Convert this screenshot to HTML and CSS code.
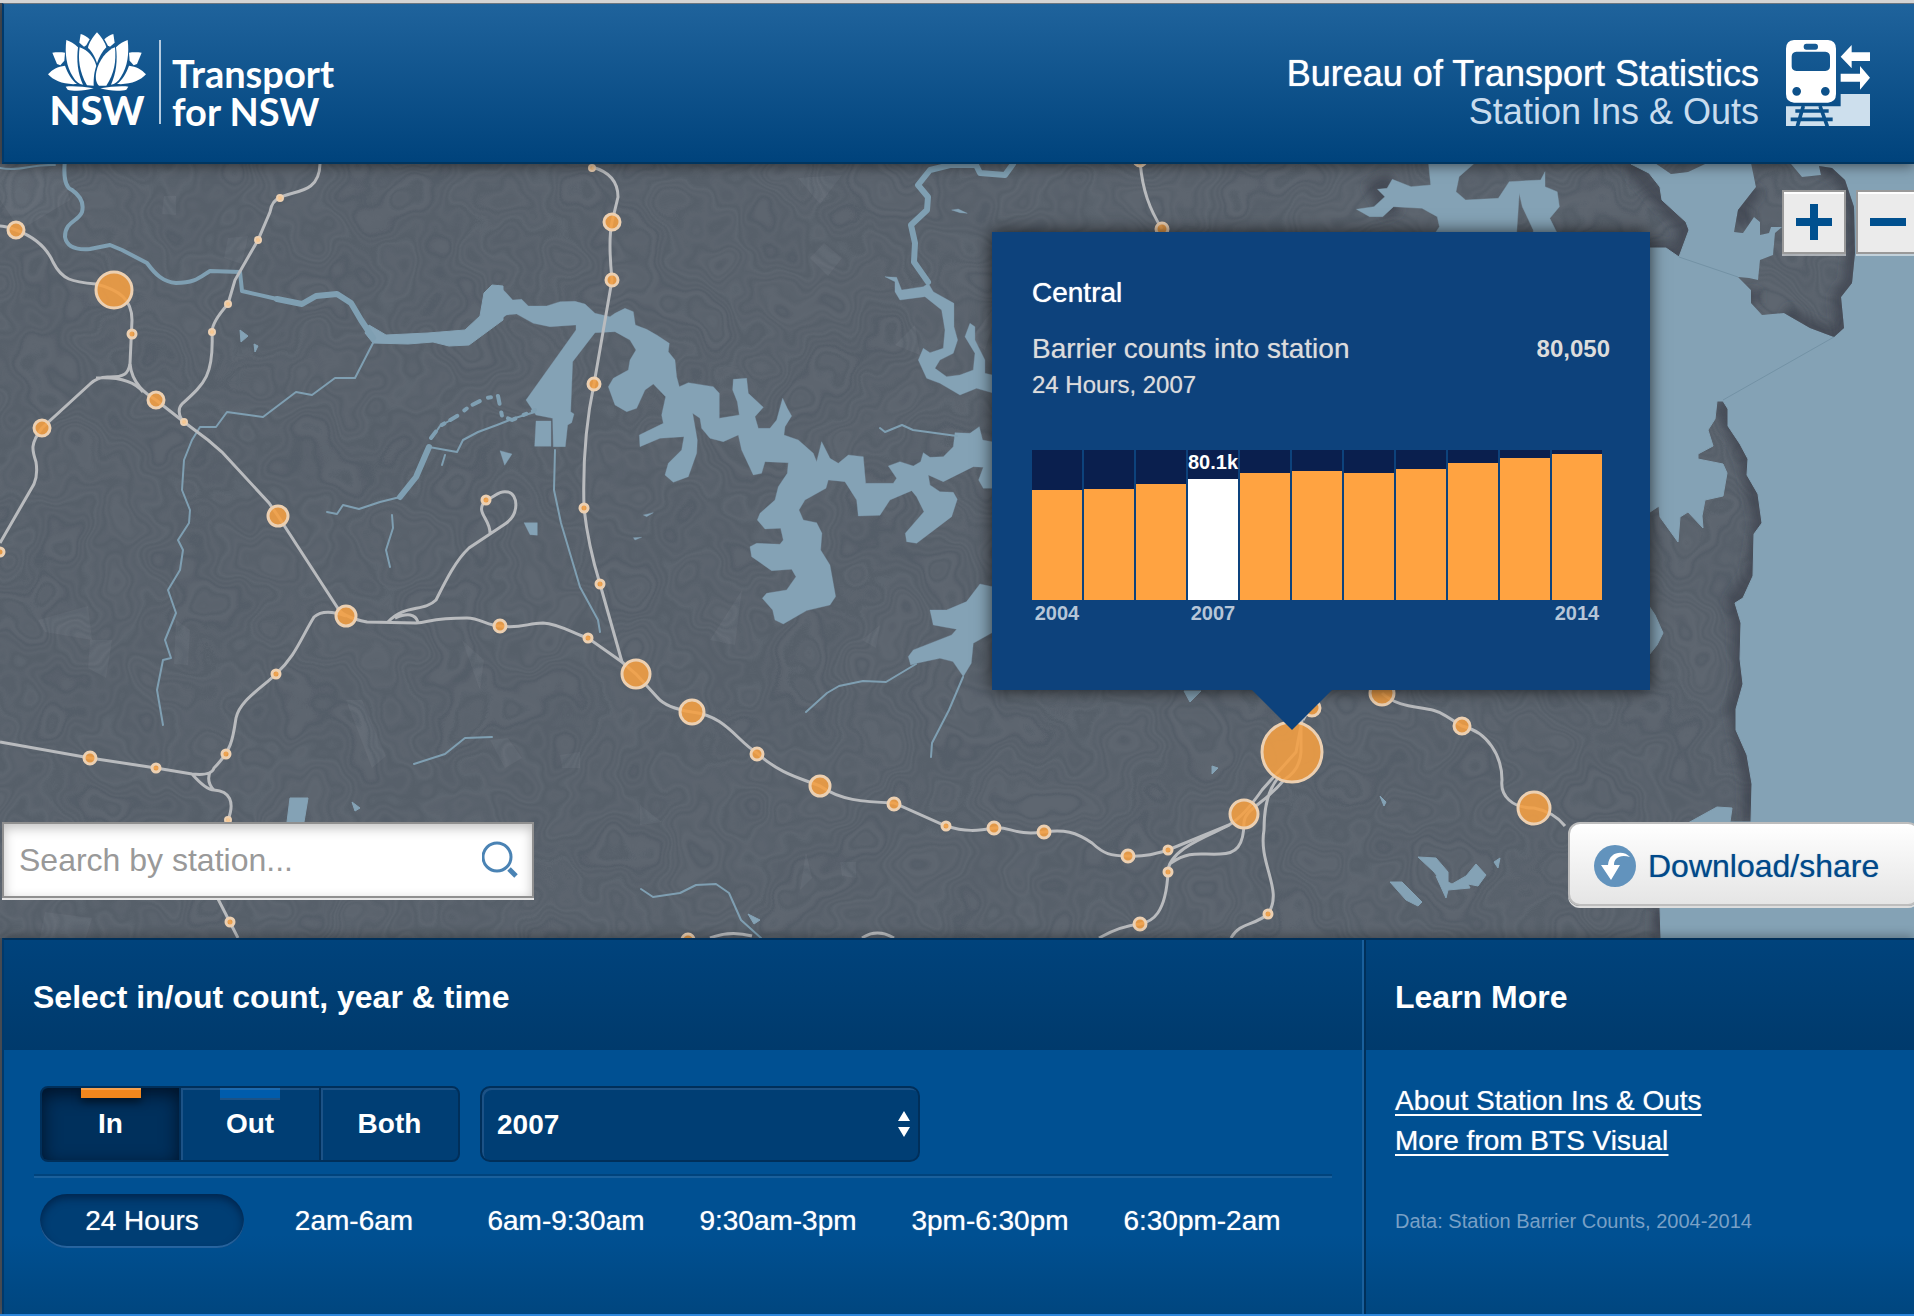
FILE: index.html
```html
<!DOCTYPE html>
<html lang="en">
<head>
<meta charset="utf-8">
<title>Station Ins &amp; Outs</title>
<link rel="stylesheet" href="styles.css">
</head>
<body>
<header class="site-header">
  <a class="brand" href="#">
    <span class="brand-mark">
      <svg class="lotus" viewBox="53 36 294 180" aria-hidden="true">
        <g id="lotus-side">
          <path d="M108 60C103 100 108 140 128 170C136 184 146 192 158 194C142 160 138 120 143 82C132 70 120 64 108 60Z"/>
          <path d="M151 42L147 68L161 80L168 76L178 58C170 50 160 44 151 42Z"/>
          <path d="M66 98L80 132L90 136L102 122L104 98C90 96 76 97 66 98Z"/>
          <path d="M53 163C66 148 82 140 104 137C112 160 124 180 140 192C100 195 70 182 53 163Z"/>
          <path d="M106 200C120 197 160 199 190 205C165 214 125 214 112 209Z"/>
        </g>
        <use href="#lotus-side" transform="translate(400 0) scale(-1 1)"/>
        <path d="M200 37C188 50 174 72 173 84C185 94 195 112 200 130C206 112 216 94 228 82C226 70 212 50 200 37Z"/>
        <path d="M148 82C143 115 146 155 170 196L190 197C190 170 192 155 198 138C192 112 172 90 148 82Z"/>
        <path d="M254 82C230 90 205 122 198 155C194 175 198 190 206 197L228 197C252 160 258 125 254 82Z"/>
      </svg>
      <span class="brand-nsw">NSW</span>
    </span>
    <span class="brand-name">Transport<br>for NSW</span>
  </a>
  <div class="app-title">
    <h1>Bureau of Transport Statistics<br><span>Station Ins &amp; Outs</span></h1>
    <svg class="train" viewBox="78 60 252 258" aria-hidden="true">
      <path class="platform" d="M78 259H242V222H330V318H78Z"/>
      <path class="track" d="M130 258L112 319M180 258L202 319M106 273H206M92 298H218"/>
      <path class="car" fill-rule="evenodd" d="M102 60H204Q228 62 228 86V222Q228 246 204 248H102Q78 246 78 222V86Q78 62 102 60ZM139 71Q131 71 131 80T139 89H166Q174 89 174 80T166 71ZM109 95Q95 96 95 110V139Q95 152 109 153H196Q210 152 210 139V110Q210 96 196 95ZM110 201A13 13 0 1 0 110 227A13 13 0 1 0 110 201ZM196 201A13 13 0 1 0 196 227A13 13 0 1 0 196 201Z"/>
      <path class="car" d="M242 110L275 75V97H330V123H275V145ZM330 173L300 138V161H242V185H300V209Z"/>
    </svg>
  </div>
</header>

<main class="map">
  <svg class="map-canvas" viewBox="0 164 1914 774" preserveAspectRatio="xMidYMid slice" role="img" aria-label="Map of Sydney train stations">
    <defs>
      <filter id="relief" x="0" y="0" width="100%" height="100%" color-interpolation-filters="sRGB">
        <feTurbulence type="fractalNoise" baseFrequency=".012" numOctaves="3" seed="7"/>
        <feColorMatrix values="0 0 0 0 .2  0 0 0 0 .25  0 0 0 0 .3  1 0 0 0 0"/>
        <feComponentTransfer><feFuncA type="table" tableValues="0 0 0 0 0 0 .04 .22 .04 0 .14 .02 .2 .04 .14 0 .2 .05 .18 .06 .24 .04 0 .2 .05 .1 0 .2 0 0 0 0 0"/></feComponentTransfer>
      </filter>
      <filter id="soft" x="-10%" y="-10%" width="120%" height="120%"><feGaussianBlur stdDeviation="5"/></filter>
      <clipPath id="head-clip"><path d="M1751 163L1756 187L1738 210L1734 232L1743 233L1754 217L1760 222V235L1769 233L1771 227H1782L1775 233L1773 255L1760 260L1758 280L1749 278L1738 277L1751 290V303L1762 315L1784 313L1810 328L1834 337L1844 328L1841 297L1852 283L1855 253L1854 207L1845 180L1832 168L1819 166L1821 175L1802 177L1791 164ZM1655 163L1671 174L1688 172L1705 164Z"/></clipPath>
    </defs>
    <rect class="land" y="164" width="1914" height="774"/>
    <g class="suburb">
      <path d="M0 164H60L70 200L20 230L0 200ZM164 196H176V215L162 214ZM228 238L248 236L242 264L224 258ZM798 178L842 175L820 204ZM810 258L824 243L842 258L828 276ZM38 620L88 606L92 640L45 632ZM90 640H112L106 678L88 668ZM176 620L190 630L188 665L174 664ZM346 700L362 700L386 756L372 768ZM462 640L484 660L480 690ZM490 740L508 738L522 758L505 768ZM45 912L92 918L86 938H40ZM710 640L742 590L735 645ZM862 640L880 625L876 648ZM895 345L915 325L920 355ZM560 755L580 752V768L562 768ZM640 805L662 822L640 825ZM800 890L806 852L812 878ZM1000 300L985 350L970 340ZM840 862H856V878L842 876Z"/>
    </g>
    <rect y="164" width="1914" height="774" filter="url(#relief)"/>
    <path class="shade" filter="url(#soft)" d="M1631 164L1662 200L1689 230L1679 257L1650 248M1723 401L1748 459L1762 523L1753 576L1735 603L1741 623L1743 684L1736 709L1752 784L1751 822M1661 908V938M1372 180L1392 215L1382 175"/>
    <g class="sea">
      <path d="M1631 164L1649 173L1660 187L1662 200L1686 222L1689 230L1679 257L1666 248L1650 248L1640 300V512H1650L1659 506L1660 517L1678 542L1680 517L1688 512L1703 528L1702 516L1705 500L1723 496L1727 473L1723 464L1698 459V454L1713 446L1708 430L1715 419L1717 401H1723L1728 409V426L1740 444L1748 459L1747 475L1758 494L1762 523L1754 534L1753 576L1743 598L1735 603L1741 623L1740 659L1743 684L1736 709V730L1747 755L1752 784L1751 822H1730L1732 808L1717 807L1688 823L1675 850L1660 908L1661 938H1914V164Z"/>
      <path d="M1645 600L1655 615L1663 633L1657 645L1645 660Z"/>
    </g>
    <g clip-path="url(#head-clip)">
      <rect class="land" x="1640" y="163" width="240" height="180"/>
      <rect x="1640" y="163" width="240" height="180" filter="url(#relief)"/>
      <path class="shade" filter="url(#soft)" d="M1819 166L1832 168L1845 180L1854 207L1855 253L1852 283L1841 297L1844 328L1834 337L1810 328L1784 313M1745 225L1740 205L1756 187M1751 290V303"/>
    </g>
    <path class="limit" d="M1679 257L1738 277M1834 337L1723 400"/>
    <g class="sea" transform="translate(1230) scale(.4363 .3333)">
      <path fill-rule="evenodd" d="M455 490L460 555L415 560L372 538L360 565L338 568L355 590L330 620L290 628L320 650H350L375 620L440 625L475 650L480 680L470 700H657L663 580L670 620L695 690V700H750L733 655L755 620L750 575L722 560V515L712 540L640 545L615 595L540 600L518 575L525 530L560 490Z"/>
    </g>
    <g class="sea" transform="translate(500 160) scale(.3333)">
      <path d="M0 380L20 400L38 420L65 418L85 438H140L180 425L225 424L255 432L285 460L330 470L345 460L375 445L400 455L406 495L440 508L470 525L508 550L505 575L525 600L530 650L538 680L565 668L640 680L658 700V775L718 765L712 725L698 690L700 658L740 655L745 700L790 742L765 770L775 805L810 805L830 780L848 715L862 745L875 768L855 800L852 825L895 840L940 880L950 905L965 845L990 895L1015 910L1045 885L1090 890L1097 970H1180L1190 955L1165 918L1200 905L1240 918L1262 905L1270 878L1290 892L1330 890L1360 860L1365 818L1410 820L1438 800L1448 840L1500 850V985H1450L1436 960L1450 922L1420 920L1330 965L1285 945L1290 975L1320 995L1360 997L1372 1018L1355 1070L1250 1150L1220 1145L1216 1120L1272 1055L1250 1010L1235 992L1170 1020L1140 1066L1075 1068L1070 1020L1035 965L985 960L978 985L915 1020L897 1050L910 1080L950 1088L966 1120L962 1170L990 1215L1007 1310L990 1335L920 1352L850 1392L825 1380L818 1350L787 1315L800 1300L860 1290L888 1250L875 1228L815 1232L755 1190L750 1160L770 1150L840 1153L850 1140L842 1105L795 1107L772 1080L780 1060L825 1020L835 980L862 940L865 908L795 905L785 940L760 945L725 870L715 825L670 845L630 835L605 805L600 775L578 760L592 840L590 880L565 950L520 967L495 945L505 910L545 870L552 830L480 835L420 860L418 825L490 790L485 765L497 710L460 672L435 690L410 745L380 755L345 735L325 680L340 655L385 630L390 600L408 570L390 540L345 515L285 518L218 605L212 755L222 762L215 788L203 795L196 860H160L158 775L108 765L78 720L228 510V495L150 500L100 490L50 462L20 465L-5 482V375Z"/>
      <path d="M108 783H153V859H104ZM0 872L36 882L14 916ZM72 1088H112V1126L90 1124ZM430 1065L460 1058L440 1070ZM400 1133L425 1132L405 1140ZM1355 150L1375 147L1402 160L1380 158Z"/>
      <path d="M1155 350L1190 352L1205 390L1270 380L1285 370L1300 395L1362 430V500L1373 540L1360 580L1320 600L1305 625L1340 650L1380 645L1420 630L1425 580L1395 530L1410 490L1425 500V540L1455 600V640L1500 650V705L1430 685L1380 705L1320 670L1280 655L1255 600L1270 565L1290 578L1330 565L1335 510L1325 450L1275 410L1200 420L1185 395V365Z"/>
      <path d="M1500 1285L1440 1272L1400 1325L1340 1350L1290 1350L1300 1395L1370 1408L1355 1425L1240 1470L1225 1490L1232 1515L1250 1510L1320 1495L1359 1505L1390 1550L1414 1510L1420 1450L1500 1405Z"/>
    </g>
    <path class="sea" d="M503 286L492 285L484 293L480 316L465 330L428 333L386 335L369 325L365 333L373 343L408 344L433 342L449 346L469 345L503 320ZM240 330L248 336L241 342ZM254 344L258 346L255 352ZM290 798H308L304 822H287ZM352 802L360 808L355 811ZM1418 857L1436 858L1448 872L1448 890L1434 872ZM1436 876L1452 884L1466 876L1476 864L1486 875L1478 886L1468 884L1470 888L1448 890L1446 898ZM1494 862L1500 858L1498 868ZM1390 882H1402L1422 902L1418 906L1406 900ZM1184 691H1201L1190 702ZM1212 766L1218 768L1212 774ZM1380 796L1386 802L1384 806ZM748 914L760 920L754 924Z"/>
    <g class="creek">
      <path class="wide" d="M65 160C63 178 66 188 72 190C82 197 84 204 82 212C78 222 65 221 65 237C67 248 78 250 90 249L110 245L122 250L147 263C155 274 163 282 176 283C196 283 200 277 210 271L240 272L242 291L277 299"/>
      <path class="river" d="M277 299L302 304L316 296L337 294L351 303L361 320L373 338"/>
      <path d="M373 343L355 378H335L312 395L296 392L263 417L227 412L216 427H200L192 440L184 460L182 490L190 510L189 523L178 540L183 550L180 570L168 590L176 613L165 640L171 658L163 660L157 690L163 725"/>
      <path d="M0 168C20 172 30 164 55 165M327 512L337 514L343 505L359 509L380 502L400 497M392 515L393 528L386 550L390 567M555 450L554 490L561 523L580 587L598 620L600 632M414 764L445 754L465 738L492 737M880 428L885 432L902 425L913 430L957 436"/>
      <path class="river" d="M400 497L416 477L429 447"/>
      <path d="M429 447L457 452L463 440L478 432L497 425L515 418L535 412M432 438L440 426L458 416M445 455L442 465"/>
      <path class="wide marsh" d="M431 438L440 426L457 416L470 406L486 398L498 396L502 416L512 420L535 410"/>
      <path d="M916 664L886 682L863 681L839 686L827 693L806 712M963 677L949 710L932 743L931 757M641 889L653 897L680 893L696 885L716 884L729 893L741 920L761 938"/>
      <path class="river" d="M1013 164L1005 175L980 173L976 165L950 165L930 170L918 185L928 197L927 210L911 225L915 243L914 262L928 282"/>
    </g>
    <g class="rail">
      <path d="M0 226C6 226 10 228 16 230C32 236 46 246 53 262C62 280 72 282 96 284C120 290 132 300 132 320L130 364C132 384 146 394 156 400L184 422L208 440L222 452L269 503L278 516L337 607Q342 617 367 622L416 623C430 622 432 618 467 618C480 618 488 626 500 626C520 629 528 623 543 623C560 624 574 634 588 638L622 662L636 674L657 697Q666 708 692 712C726 716 736 740 757 753C780 774 800 778 820 786C840 800 862 802 894 803L946 826C965 832 978 831 994 828C1010 826 1014 836 1044 832C1064 829 1076 832 1092 843C1104 854 1110 856 1128 856C1146 857 1158 853 1168 850L1229 825Q1244 816 1262 790L1296 752L1303 715"/>
      <path d="M592 167Q618 174 618 197L612 222Q608 240 612 280L594 384Q582 440 584 508Q588 545 600 584L622 662M320 163C320 196 290 190 280 198Q272 200 270 212L258 240L235 280L228 304Q212 322 212 332C214 376 204 384 182 404C178 408 178 416 184 422"/>
      <path d="M130 364C128 374 124 377 110 377Q98 376 90 384L42 428C30 444 32 450 36 462Q38 475 34 484L0 543M96 378Q130 376 143 392"/>
      <path d="M0 742L90 758L156 768L192 774Q212 776 214 768C232 750 233 738 236 718C240 700 262 688 276 674C296 655 300 640 314 617Q324 608 346 616M192 774Q206 790 214 790C230 791 235 802 228 820L218 899L238 938M210 772Q206 782 214 790"/>
      <path d="M388 622C404 604 424 612 436 600C446 580 456 560 469 548L505 524C520 514 518 494 508 492C498 490 494 498 486 500C474 512 490 518 490 533M395 618Q414 610 418 622"/>
      <path d="M1168 872C1168 848 1214 834 1229 825M1171 863C1190 850 1200 855 1220 854C1236 854 1244 846 1244 822C1246 808 1262 806 1284 780Q1300 770 1301 752V720M1168 872C1166 914 1152 922 1140 924Q1120 926 1099 938M1231 938C1240 922 1254 926 1268 914C1284 890 1258 864 1264 830Q1264 792 1280 776M1320 690L1303 720M1382 693C1402 712 1430 704 1446 716L1462 726C1488 732 1502 756 1502 780C1500 796 1512 808 1534 808Q1554 812 1565 826M1140 160C1142 190 1150 210 1162 229M710 938Q730 930 752 936M862 938Q877 928 894 938"/>
    </g>
    <g class="stations">
      <circle cx="16" cy="230" r="8"/><circle cx="114" cy="290" r="18"/><circle cx="132" cy="334" r="4"/><circle cx="156" cy="400" r="8"/><circle cx="42" cy="428" r="8"/><circle cx="612" cy="222" r="8"/><circle cx="612" cy="280" r="6"/><circle cx="594" cy="384" r="6"/><circle cx="584" cy="508" r="4"/><circle cx="600" cy="584" r="4"/><circle cx="0" cy="552" r="4"/><circle cx="278" cy="516" r="10"/><circle cx="346" cy="616" r="10"/><circle cx="276" cy="674" r="4"/><circle cx="226" cy="754" r="4"/><circle cx="90" cy="758" r="6"/><circle cx="156" cy="768" r="4"/><circle cx="230" cy="922" r="4"/><circle cx="486" cy="500" r="4"/><circle cx="500" cy="626" r="6"/><circle cx="588" cy="638" r="4"/><circle cx="636" cy="674" r="14"/><circle cx="692" cy="712" r="12"/><circle cx="757" cy="754" r="6"/><circle cx="820" cy="786" r="10"/><circle cx="894" cy="804" r="6"/><circle cx="946" cy="826" r="4"/><circle cx="994" cy="828" r="6"/><circle cx="1044" cy="832" r="6"/><circle cx="1128" cy="856" r="6"/><circle cx="1168" cy="850" r="4"/><circle cx="1168" cy="872" r="4"/><circle cx="1140" cy="924" r="6"/><circle cx="1268" cy="914" r="4"/><circle cx="1244" cy="814" r="14"/><circle cx="1382" cy="693" r="12"/><circle cx="1462" cy="726" r="8"/><circle cx="1534" cy="808" r="16"/><circle cx="1312" cy="708" r="8"/><circle cx="1162" cy="229" r="6"/><circle cx="688" cy="940" r="6"/><circle cx="1140" cy="160" r="6"/><circle cx="1292" cy="752" r="30"/>
      <g class="halt"><circle cx="184" cy="422" r="3"/><circle cx="280" cy="198" r="3"/><circle cx="258" cy="240" r="3"/><circle cx="228" cy="304" r="3"/><circle cx="212" cy="332" r="3"/><circle cx="592" cy="168" r="3"/><circle cx="228" cy="820" r="3"/></g>
    </g>
  </svg>

  <div class="zoom">
    <button type="button" aria-label="Zoom in"><svg viewBox="0 0 36 36"><path d="M0 18H36M18 0V36"/></svg></button>
    <button type="button" aria-label="Zoom out"><svg viewBox="0 0 36 36"><path d="M0 18H36"/></svg></button>
  </div>

  <section class="popup">
    <h2>Central</h2>
    <div class="popup-count"><span>Barrier counts into station</span><strong>80,050</strong></div>
    <p>24 Hours, 2007</p>
    <div class="chart">
      <div class="slot"><div class="bar" style="height:110px"></div></div>
      <div class="slot"><div class="bar" style="height:111px"></div></div>
      <div class="slot"><div class="bar" style="height:116px"></div></div>
      <div class="slot current"><span>80.1k</span><div class="bar" style="height:121px"></div></div>
      <div class="slot"><div class="bar" style="height:127px"></div></div>
      <div class="slot"><div class="bar" style="height:129px"></div></div>
      <div class="slot"><div class="bar" style="height:127px"></div></div>
      <div class="slot"><div class="bar" style="height:131px"></div></div>
      <div class="slot"><div class="bar" style="height:137px"></div></div>
      <div class="slot"><div class="bar" style="height:142px"></div></div>
      <div class="slot"><div class="bar" style="height:146px"></div></div>
    </div>
    <div class="years"><span>2004</span><span></span><span></span><span>2007</span><span></span><span></span><span></span><span></span><span></span><span></span><span>2014</span></div>
  </section>

  <form class="search">
    <input type="text" placeholder="Search by station..." aria-label="Search by station">
    <button type="submit" aria-label="Search"><svg viewBox="0 0 36 38"><circle cx="15" cy="16" r="14"/><path d="M27 28L34 35"/></svg></button>
  </form>

  <button class="download" type="button">
    <svg viewBox="0 0 42 42" aria-hidden="true"><circle cx="21" cy="21" r="21"/><path d="M36 12C30 5 15 6 14 20H7L17 35L26 20H20C20 13 26 9 36 12Z"/></svg>
    Download/share
  </button>
</main>

<div class="panel">
  <section class="controls">
    <h2>Select in/out count, year &amp; time</h2>
    <div class="panel-body">
      <div class="row">
        <div class="segments" role="radiogroup" aria-label="Count">
          <label class="tab-in"><input type="radio" name="count" checked>In</label>
          <label class="tab-out"><input type="radio" name="count">Out</label>
          <label><input type="radio" name="count">Both</label>
        </div>
        <div class="year">
          <select aria-label="Year"><option>2007</option><option>2004</option><option>2014</option></select>
          <svg viewBox="0 0 12 26" aria-hidden="true"><path d="M6 0L12 10H0ZM6 26L12 16H0Z"/></svg>
        </div>
      </div>
      <div class="times" role="radiogroup" aria-label="Time">
        <label><input type="radio" name="time" checked>24 Hours</label>
        <label><input type="radio" name="time">2am-6am</label>
        <label><input type="radio" name="time">6am-9:30am</label>
        <label><input type="radio" name="time">9:30am-3pm</label>
        <label><input type="radio" name="time">3pm-6:30pm</label>
        <label><input type="radio" name="time">6:30pm-2am</label>
      </div>
    </div>
  </section>
  <section class="learn">
    <h2>Learn More</h2>
    <div class="panel-body">
      <a href="#">About Station Ins &amp; Outs</a>
      <a href="#">More from BTS Visual</a>
      <p>Data: Station Barrier Counts, 2004-2014</p>
    </div>
  </section>
</div>
</body>
</html>
```
FILE: styles.css
```css
* { box-sizing: border-box; }

body {
  margin: 0;
  min-height: 100vh;
  display: flex;
  flex-direction: column;
  overflow-x: hidden;
  border-top: 3px solid #d4d4d4;
  border-bottom: 2px solid #2a86dc;
  background: #50555e;
  font-family: "Liberation Sans", Arial, sans-serif;
  color: #fff;
}

h1, h2, p { margin: 0; }
button, input, select { font: inherit; }

/* Header */
.site-header {
  position: relative;
  z-index: 2;
  display: flex;
  justify-content: space-between;
  height: 161px;
  margin-left: 2px;
  padding: 0 44px;
  border-top: 1px solid #6c7680;
  border-left: 2px solid #00396b;
  border-bottom: 2px solid #00355f;
  background: linear-gradient(#1f639c, #00437c);
  box-shadow: 0 2px 12px rgba(0, 0, 0, .5);
}

.brand {
  display: flex;
  align-items: flex-start;
  padding-top: 28px;
  color: #fff;
  text-decoration: none;
}

.brand-mark { display: flex; flex-direction: column; align-items: center; width: 98px; }
.lotus { width: 98px; height: 60px; fill: #fff; }
.brand-nsw { font: 900 40px/36px Lato, sans-serif; }

.brand-name {
  height: 84px;
  margin: 8px 0 0 13px;
  padding: 14px 0 0 11px;
  border-left: 2px solid #b4cbe0;
  font: 700 38px/38px Lato, sans-serif;
}

.app-title { display: flex; align-items: center; gap: 27px; }
.app-title h1 {
  padding-top: 20px;
  font-size: 36px;
  line-height: 38px;
  font-weight: 400;
  text-align: right;
  text-shadow: 0 0 1px #fff;
}
.app-title h1 span { color: #c8dcee; text-shadow: none; }
.train { width: 84px; height: 86px; }
.platform { fill: #cddfed; }
.track { fill: none; stroke: #0b5089; stroke-width: 11; }
.car { fill: #fff; }

/* Map */
.map {
  position: relative;
  flex: 1;
  min-height: 720px;
  overflow: hidden;
}
.map-canvas { position: absolute; inset: 0; width: 100%; height: 100%; }
.land { fill: #5e6670; }
.suburb { fill: #6a727b; opacity: .6; }
.shade { fill: none; stroke: #363c47; stroke-opacity: .6; stroke-width: 18; }
.sea { fill: #84a2b5; stroke: #84a2b5; stroke-width: 1; stroke-linejoin: round; }
.limit { fill: none; stroke: #7392a5; }
.creek { fill: none; stroke: #7f9fb2; stroke-width: 2; stroke-linejoin: round; stroke-linecap: round; }
.creek .wide { stroke-width: 4; }
.creek .river { stroke-width: 6; }
.creek .marsh { stroke-dasharray: 8 9 3 7; }
.rail { fill: none; stroke: #b9bbbe; stroke-width: 3; }
.stations { fill: #f59f42; fill-opacity: .88; stroke: #ecd0b2; stroke-width: 3; }
.halt { fill: #ffc98c; stroke-width: 2; }

.zoom { position: absolute; top: 26px; right: -6px; display: flex; gap: 10px; }
.zoom button {
  display: grid;
  place-items: center;
  width: 64px;
  height: 64px;
  padding: 0;
  border: 2px solid #999;
  background: #ebebeb;
  box-shadow: 0 2px rgba(255, 255, 255, .5), inset 0 2px #fff;
}
.zoom svg { width: 36px; height: 36px; stroke: #00508f; stroke-width: 8; }

.popup {
  position: absolute;
  top: 68px;
  left: 992px;
  width: 658px;
  height: 458px;
  padding: 41px 40px 40px;
  background: #0d427c;
  box-shadow: 0 0 16px rgba(0, 0, 0, .7);
}
.popup::after {
  content: "";
  position: absolute;
  top: 100%;
  left: 260px;
  border: 40px solid transparent;
  border-top-color: #0d427c;
  border-bottom: 0;
}
.popup h2 { font-size: 28px; line-height: 40px; font-weight: 400; text-shadow: 0 0 1px #fff; }
.popup-count { display: flex; justify-content: space-between; margin-top: 16px; font-size: 28px; line-height: 40px; color: #dcdcdc; }
.popup-count strong { font-size: 24px; }
.popup p { font-size: 24px; line-height: 32px; color: #dcdcdc; }
.popup-count span, .popup p { text-shadow: 0 0 1px rgba(220, 220, 220, .6); }
.chart, .years { display: grid; grid-template-columns: repeat(11, 50px); gap: 2px; }
.chart { height: 150px; margin-top: 49px; }
.slot { display: flex; flex-direction: column; justify-content: flex-end; background: #0a1f4e; }
.slot span { font-size: 20px; line-height: 20px; font-weight: 700; margin-bottom: 7px; }
.bar { background: #ffa341; }
.current .bar { background: #fff; }
.years { margin-top: 1px; font-size: 20px; line-height: 24px; font-weight: 700; text-align: center; color: #b6c6d8; }

.search {
  position: absolute;
  left: 2px;
  bottom: 40px;
  display: flex;
  align-items: center;
  width: 532px;
  height: 76px;
  border: 2px solid #8f8f8f;
  background: #fff;
  box-shadow: 0 2px #e4e4e4, inset 0 4px 12px rgba(0, 0, 0, .25);
}
.search input { flex: 1; min-width: 0; padding: 0 15px; border: 0; outline: 0; background: none; font-size: 32px; }
.search input::placeholder { color: #999; opacity: 1; }
.search button { display: grid; padding: 0 14px 0 0; border: 0; background: none; }
.search svg { width: 36px; height: 38px; fill: none; stroke: #4a83b4; stroke-width: 3; }
.search path { stroke-width: 5; }

.download {
  position: absolute;
  right: -6px;
  bottom: 32px;
  display: flex;
  align-items: center;
  gap: 12px;
  width: 352px;
  height: 84px;
  padding: 4px 24px 0;
  border: 2px solid #bdbdbd;
  border-radius: 12px;
  background: linear-gradient(#fff, #e5e5e5);
  box-shadow: 0 2px #ddd;
  font-size: 32px;
  color: #00498a;
  text-shadow: 0 0 1px rgba(0, 73, 138, .6);
  white-space: nowrap;
}
.download svg { width: 42px; height: 42px; }
.download circle { fill: #6293bd; }
.download path { fill: #fff; }

/* Control panel */
.panel {
  position: relative;
  display: flex;
  height: 376px;
  margin-left: 2px;
  border-top: 2px solid #00305a;
  border-left: 2px solid #00396b;
  background: #005092;
  box-shadow: 0 -2px 10px rgba(0, 0, 0, .3);
}
.panel section { display: flex; flex-direction: column; }
.panel h2 {
  height: 110px;
  padding: 0 29px;
  background: linear-gradient(#00437c, #003a6c);
  font-size: 32px;
  line-height: 114px;
}
.panel-body { flex: 1; padding: 36px 30px 0; background: linear-gradient(#005092 70%, #00467f); }
.controls { width: 1360px; border-right: 2px solid #1a609c; }
.learn { flex: 1; border-left: 2px solid #00305a; }

.row { display: flex; gap: 20px; padding: 0 6px 12px; border-bottom: 2px solid #00437c; }
.segments {
  display: grid;
  grid-template-columns: 137px 140px 1fr;
  width: 420px;
  height: 76px;
  overflow: hidden;
  border: 2px solid #002f5a;
  border-radius: 8px;
  background: #003e74;
}
.segments label {
  position: relative;
  font-size: 28px;
  font-weight: 700;
  line-height: 72px;
  text-align: center;
  box-shadow: inset 2px 2px #1c5286;
}
.segments label + label { border-left: 2px solid #002f5a; }
.segments label:has(:checked) {
  background: #00305c;
  box-shadow: inset 0 6px 18px rgba(0, 10, 25, .8);
}
.segments input, .times input { position: absolute; opacity: 0; pointer-events: none; }
.tab-in::before, .tab-out::before { content: ""; position: absolute; top: 0; left: 39px; width: 60px; height: 8px; }
.tab-in::before { background: #f2871d; border-top: 2px solid #f8a14c; box-shadow: 0 4px 8px rgba(0, 0, 0, .5); }
.tab-out::before { background: #005cac; border-top: 2px solid #1c6ab0; box-shadow: 0 2px #1c5286; }

.year { position: relative; width: 440px; height: 76px; }
.year select {
  appearance: none;
  width: 100%;
  height: 100%;
  padding: 0 15px;
  border: 2px solid #002f5a;
  border-radius: 10px;
  background: #003e74;
  box-shadow: inset 2px 2px #1c5286;
  font-size: 28px;
  font-weight: 700;
  color: #fff;
}
.year svg { position: absolute; top: 25px; right: 10px; width: 12px; height: 26px; fill: #fff; pointer-events: none; }

.times { display: flex; gap: 8px; padding: 16px 6px 0; border-top: 2px solid #1a609c; }
.times label {
  position: relative;
  width: 204px;
  height: 54px;
  border-radius: 27px;
  font-size: 28px;
  line-height: 54px;
  text-align: center;
  text-shadow: 0 0 1px rgba(255, 255, 255, .7);
}
.times label:has(:checked) {
  background: #003e74;
  box-shadow: inset 0 4px 8px rgba(0, 20, 50, .6), inset 0 -2px #2a6ba8;
}

.learn .panel-body { padding: 31px 29px 0; }
.learn a {
  display: block;
  width: max-content;
  font-size: 28px;
  line-height: 40px;
  color: #fff;
  text-decoration-thickness: 2px;
  text-underline-offset: 4px;
  text-shadow: 0 0 1px rgba(255, 255, 255, .7);
}
.learn p { margin-top: 48px; font-size: 20px; line-height: 24px; color: #79a0c6; }
```
